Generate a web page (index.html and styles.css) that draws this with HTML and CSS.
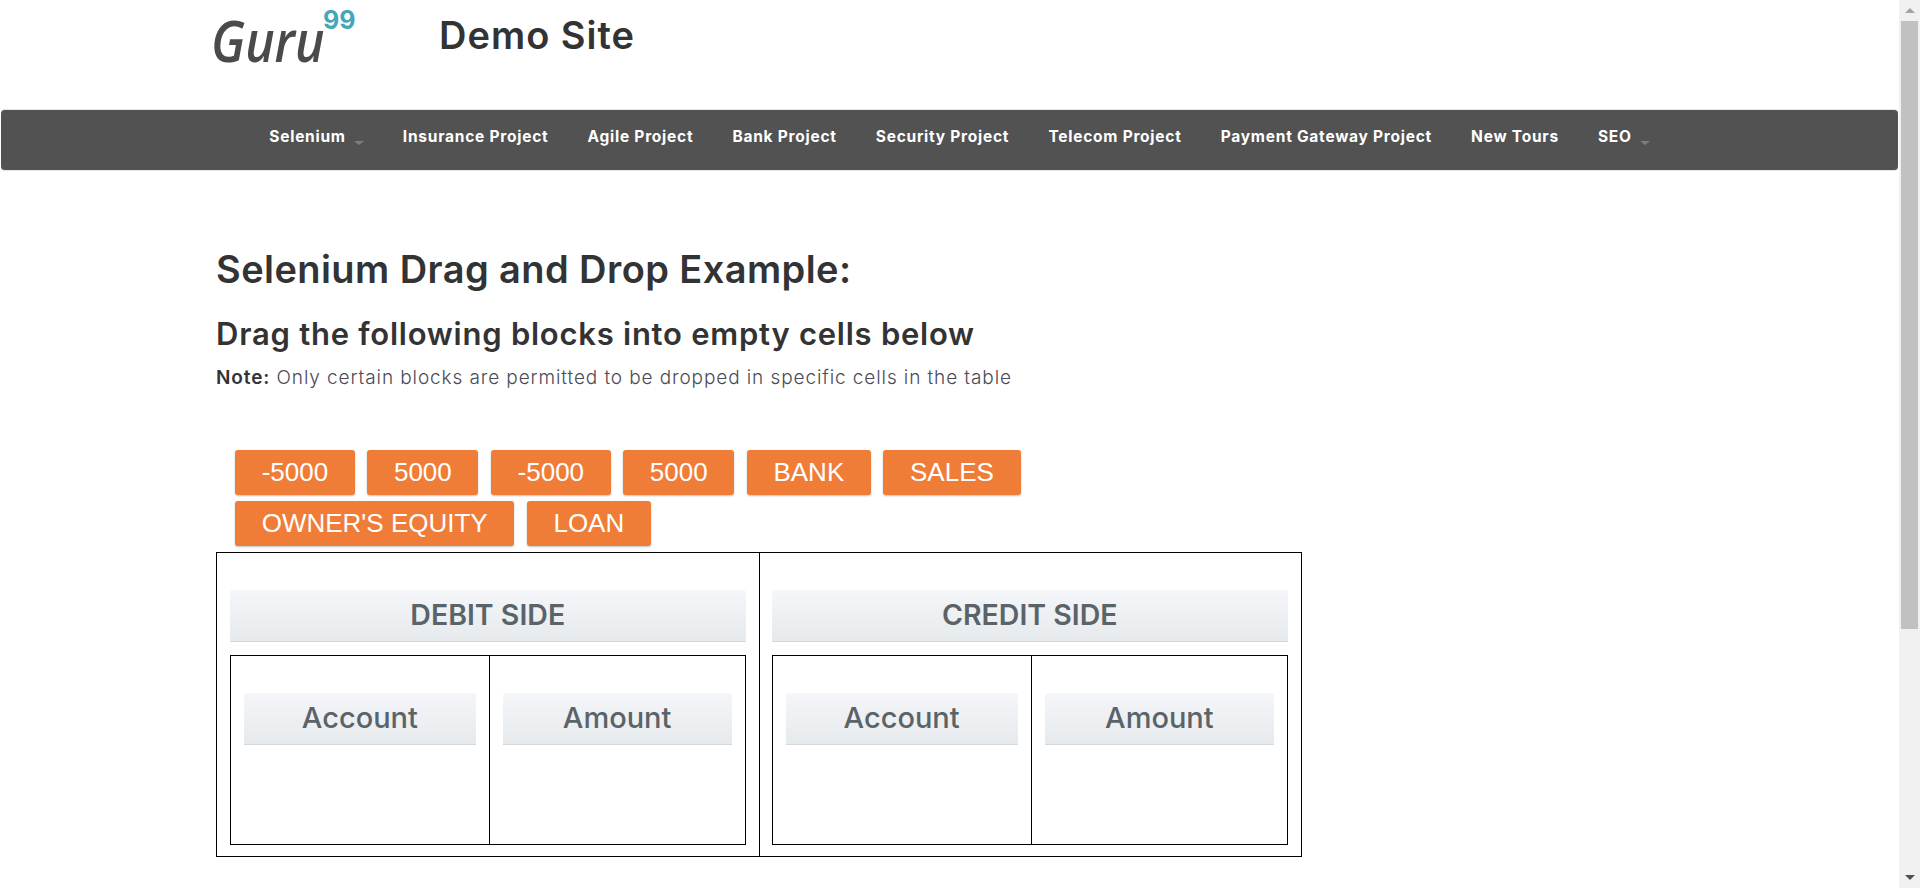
FILE: index.html
```html
<!DOCTYPE html>
<html lang="en">
<head>
    <meta charset="UTF-8">
    <title>Selenium Drag and Drop Example</title>
    <link rel="stylesheet" href="styles.css">
</head>
<body>
    <div class="page">
        <div class="header">
            <div class="logo"><span class="logo-name">Guru</span><span class="logo-num">99</span></div>
            <div class="site-name">Demo Site</div>
        </div>

        <div class="navbar">
            <a>Selenium<i class="caret"></i></a>
            <a>Insurance Project</a>
            <a>Agile Project</a>
            <a>Bank Project</a>
            <a>Security Project</a>
            <a>Telecom Project</a>
            <a>Payment Gateway Project</a>
            <a>New Tours</a>
            <a>SEO<i class="caret"></i></a>
        </div>

        <div class="content">
            <h2>Selenium Drag and Drop Example:</h2>
            <h3>Drag the following blocks into empty cells below</h3>
            <p class="note"><b>Note:</b> Only certain blocks are permitted to be dropped in specific cells in the table</p>

            <div class="blocks">
                <a class="block">-5000</a>
                <a class="block">5000</a>
                <a class="block">-5000</a>
                <a class="block">5000</a>
                <a class="block">BANK</a>
                <a class="block">SALES</a>
                <a class="block">OWNER'S EQUITY</a>
                <a class="block">LOAN</a>
            </div>

            <table class="ledger">
                <tr>
                    <td>
                        <h3 class="side-title">DEBIT SIDE</h3>
                        <table class="side">
                            <tr>
                                <td><h3 class="col-title">Account</h3></td>
                                <td><h3 class="col-title">Amount</h3></td>
                            </tr>
                        </table>
                    </td>
                    <td>
                        <h3 class="side-title">CREDIT SIDE</h3>
                        <table class="side">
                            <tr>
                                <td><h3 class="col-title">Account</h3></td>
                                <td><h3 class="col-title">Amount</h3></td>
                            </tr>
                        </table>
                    </td>
                </tr>
            </table>
        </div>
    </div>

    <div class="scrollbar">
        <div class="arrow-up"></div>
        <div class="thumb"></div>
        <div class="arrow-down"></div>
    </div>
</body>
</html>
```

FILE: styles.css
```css
html, body {
    height: 100%;
}
body {
    margin: 0;
    display: flex;
    overflow: hidden;
    font-family: Inter, "Open Sans", sans-serif;
    color: #333;
    background-color: #fff;
}
.page {
    flex: 1;
    min-width: 0;
}
.header {
    display: flex;
    height: 109px;
    padding-left: 213px;
}
.logo {
    display: flex;
    width: 226px;
    height: 70px;
    color: #4a4a4a;
}
.logo-name {
    margin-left: -2px;
    margin-right: -20px;
    font-family: "Open Sans", sans-serif;
    font-size: 58px;
    font-style: italic;
    font-weight: 600;
    line-height: 80px;
    transform: scaleX(.86);
    transform-origin: left;
}
.logo-num {
    color: #45a5b9;
    font-size: 25px;
    font-weight: 700;
    line-height: 40px;
}
.site-name {
    font-size: 38px;
    font-weight: 600;
    letter-spacing: 1px;
    line-height: 70px;
}
.navbar {
    display: flex;
    justify-content: center;
    gap: 39.1px;
    height: 60px;
    margin: 0 1px;
    padding-left: 20px;
    border: 1px solid #e7e7e7;
    border-width: 1px 0;
    border-radius: 4px;
    background-color: #525252;
}
.navbar a {
    color: #fff;
    font-size: 15.5px;
    font-weight: 700;
    letter-spacing: .75px;
    line-height: 53px;
    height: 53px;
}
.caret {
    display: inline-block;
    margin-left: 8px;
    vertical-align: -3px;
    border-top: 4px solid #7d7d7d;
    border-left: 5px solid transparent;
    border-right: 5px solid transparent;
}
.content {
    padding: 0 0 0 216px;
}
h2 {
    margin: 75px 0 0;
    font-size: 38px;
    font-weight: 600;
    letter-spacing: .42px;
    line-height: 46px;
}
h3 {
    margin: 22px 0 0;
    font-size: 31px;
    font-weight: 600;
    letter-spacing: .75px;
    line-height: 40px;
}
.note {
    margin: 10px 0 0;
    color: #4a4a55;
    font-size: 19px;
    font-weight: 300;
    letter-spacing: .9px;
    line-height: 28px;
}
.note b {
    color: #333;
    font-weight: 600;
}
.blocks {
    display: flex;
    flex-wrap: wrap;
    gap: 6px 12.4px;
    width: 840px;
    margin: 58px 0 0 19px;
}
.block {
    height: 45px;
    padding: 0 26.7px;
    border-radius: 3px;
    background-color: #ef7d38;
    box-shadow: 0 1px 2px rgba(0, 0, 0, .25);
    color: #fff;
    font-family: "Liberation Sans", Arial, sans-serif;
    font-size: 26px;
    line-height: 45px;
}
table {
    border-collapse: collapse;
    table-layout: fixed;
}
td {
    vertical-align: top;
    border: 1px solid #000;
    padding: 0 13px;
}
.ledger {
    width: 1086px;
    margin-top: 6px;
}
.ledger > tbody > tr > td {
    padding-bottom: 11px;
}
.ledger > tbody > tr > td + td {
    padding-left: 12px;
}
.side {
    width: 100%;
    margin-top: 13px;
}
.side td {
    box-sizing: border-box;
    height: 189px;
}
.side td:first-child {
    width: 50.3%;
}
.side-title, .col-title {
    height: 52px;
    border-bottom: 1px solid #d5d7da;
    border-radius: 3px 3px 0 0;
    background: linear-gradient(#f4f6fa, #e7eaed);
    color: #5a6468;
    text-align: center;
    font-size: 29px;
    font-weight: 500;
    letter-spacing: 0;
    line-height: 50px;
    box-sizing: border-box;
}
.side-title {
    margin-top: 37px;
    font-size: 28.5px;
    font-weight: 600;
}
.col-title {
    margin-top: 37px;
}
.scrollbar {
    display: flex;
    flex-direction: column;
    align-items: center;
    width: 21px;
    background-color: #f1f1f1;
}
.arrow-up {
    margin: 8px 0 8px;
    border-bottom: 5px solid #a3a3a3;
    border-left: 5px solid transparent;
    border-right: 5px solid transparent;
}
.thumb {
    width: 17px;
    height: 608px;
    background-color: #c1c1c1;
}
.arrow-down {
    margin-top: auto;
    margin-bottom: 8px;
    border-top: 5px solid #505050;
    border-left: 5px solid transparent;
    border-right: 5px solid transparent;
}
```
